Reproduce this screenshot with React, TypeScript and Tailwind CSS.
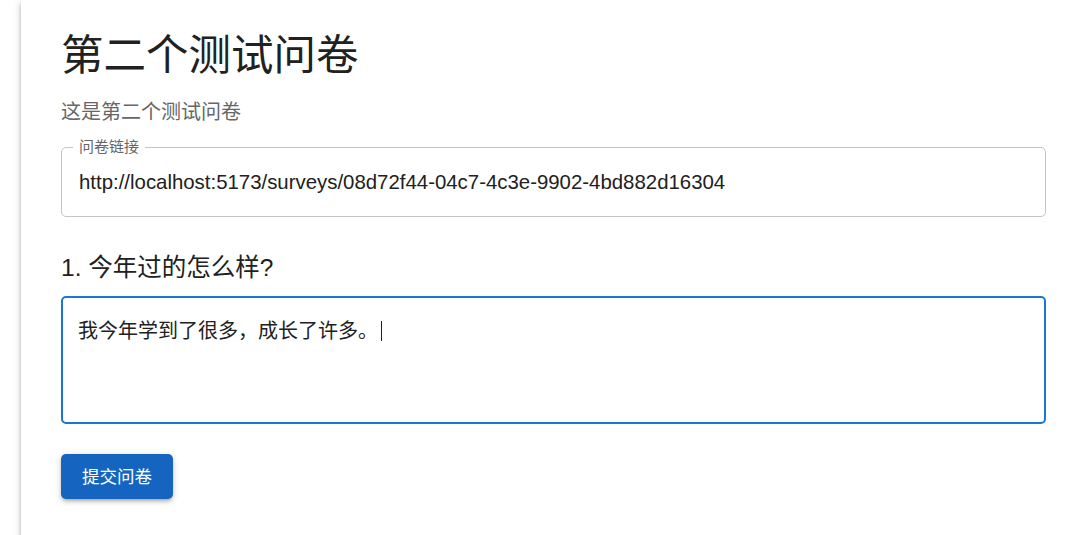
import React from "react";

const font = '"Liberation Sans", Arial, "Noto Sans CJK SC", sans-serif';

export default function App() {
  return (
    <div className="w-[1085px] h-[535px] overflow-hidden bg-white" style={{ fontFamily: font }}>
      <div className="pl-[21px] h-full">
        <div className="w-[1066px] h-[560px] bg-white px-[40px] pt-[30px] shadow-[0_2px_4px_-1px_rgba(0,0,0,0.2),0_4px_5px_0_rgba(0,0,0,0.14),0_1px_10px_0_rgba(0,0,0,0.12)]">
          <div className="flex flex-col w-[985px]">
            <h1 className="text-[42.5px] leading-[52px] text-[#212121] font-normal m-0">第二个测试问卷</h1>
            <p className="mt-[15px] text-[20px] leading-[30px] text-[#666666]">这是第二个测试问卷</p>

            <div className="relative mt-[20px] h-[70px] border border-[#c4c4c4] rounded-[5px] flex items-center pl-[17px]">
              <span className="absolute left-[11px] top-[-10px] px-[6px] bg-white text-[15px] leading-[18px] text-[#666666]">问卷链接</span>
              <span className="text-[20.4px] leading-[28px] text-[#212121]">http://localhost:5173/surveys/08d72f44-04c7-4c3e-9902-4bd882d16304</span>
            </div>

            <h2 className="mt-[33px] text-[24.5px] leading-[36px] text-[#212121] font-normal">1. 今年过的怎么样?</h2>

            <div className="mt-[10px] h-[128px] border-2 border-[#1976d2] rounded-[5px] pl-[15px] pt-[21px]">
              <div className="flex items-center text-[20px] leading-[24px] text-[#212121]">
                <span>我今年学到了很多，成长了许多。</span>
                <span className="ml-[3px] inline-block w-[1px] h-[20px] bg-[#212121]" />
              </div>
            </div>

            <div className="mt-[30px]">
              <button className="h-[45px] w-[112px] rounded-[5px] bg-[#1565c0] text-white text-[17.5px] leading-[24px] shadow-[0_3px_3px_-2px_rgba(0,0,0,0.2),0_3px_4px_0_rgba(0,0,0,0.14),0_1px_8px_0_rgba(0,0,0,0.12)]">
                提交问卷
              </button>
            </div>
          </div>
        </div>
      </div>
    </div>
  );
}
